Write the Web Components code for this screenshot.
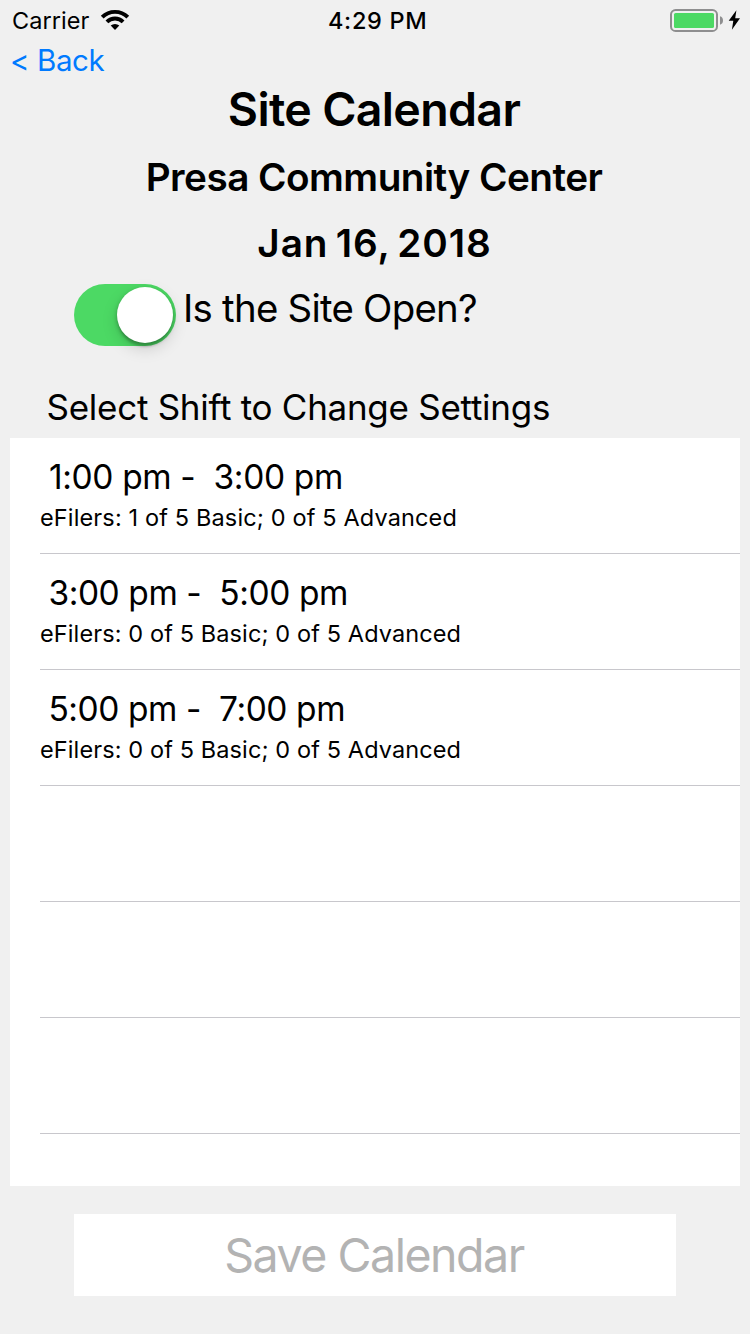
<!DOCTYPE html>
<html lang="en">
<head>
<meta charset="utf-8">
<title>Site Calendar</title>
<style>
body { margin: 0; background: #f0f0f0; color: #000; font-family: Inter, "Liberation Sans", sans-serif; }
</style>
</head>
<body>
<calendar-screen></calendar-screen>
<script>
function define(name, markup) {
  const template = document.createElement('template');
  template.innerHTML = markup;
  customElements.define(name, class extends HTMLElement {
    constructor() {
      super();
      this.attachShadow({ mode: 'open' }).append(template.content.cloneNode(true));
    }
  });
}

define('wifi-icon', `
<style>:host { display: block; width: 30px; height: 22px; } svg { display: block; }</style>
<svg width="30" height="22" viewBox="0 0 30 22">
  <g fill="none" stroke="#000" stroke-width="3.9">
    <path d="M2.2 8.2A18.1 18.1 0 0 1 27.8 8.2"/>
    <path d="M6.9 12.9A11.5 11.5 0 0 1 23.1 12.9"/>
  </g>
  <path d="M15 21L10.7 16.6A6.3 6.3 0 0 1 19.3 16.6Z"/>
</svg>`);

define('battery-icon', `
<style>:host { display: block; width: 72px; height: 24px; } svg { display: block; }</style>
<svg width="72" height="24" viewBox="0 0 72 24">
  <rect x="1" y="2" width="46" height="21" rx="4.6" fill="none" stroke="#8e8e8f" stroke-width="2"/>
  <rect x="4" y="5" width="40" height="15" rx="1.6" fill="#4cd964"/>
  <path d="M50 8.3Q53 9.2 53 12.5T50 16.7Z" fill="#8e8e8f"/>
  <path d="M66.4 2.2L58.7 12.8H63.3L61.9 21.8L70 10.3H65.2Z"/>
</svg>`);

define('status-bar', `
<style>
:host { display: grid; grid-template-columns: 1fr auto 1fr; height: 40px; line-height: 41px; font-size: 23.5px; box-sizing: border-box; padding: 0 8px 0 12px; }
.left { display: flex; }
.left span { letter-spacing: .05px; }
wifi-icon { margin: 9px 0 0 10.6px; }
.time { font-weight: 500; letter-spacing: .7px; margin-left: 1.5px; }
battery-icon { justify-self: end; margin-top: 8px; }
</style>
<div class="left"><span>Carrier</span><wifi-icon></wifi-icon></div>
<span class="time">4:29 PM</span>
<battery-icon></battery-icon>`);

define('back-link', `
<style>
:host { display: block; height: 41px; line-height: 41px; padding-left: 10px; font-size: 29.5px; letter-spacing: -.4px; color: #007aff; }
</style>
<slot></slot>`);

define('page-heading', `
<style>
:host { display: block; text-align: center; font-weight: 600; }
.title { font-size: 46.5px; line-height: 56px; padding: 0 2px 7px 0; letter-spacing: -.65px; }
.sub { font-size: 38.7px; line-height: 66px; padding-right: 2px; letter-spacing: -.53px; }
.date { padding-right: 1px; letter-spacing: .95px; word-spacing: -3.5px; }
</style>
<div class="title"><slot name="title"></slot></div>
<div class="sub"><slot name="site"></slot></div>
<div class="sub date"><slot name="date"></slot></div>`);

define('toggle-switch', `
<style>
:host { display: flex; justify-content: flex-end; box-sizing: border-box; width: 102px; height: 62px; border-radius: 31px; padding: 3px; background: #4cd964; }
i { display: block; width: 56px; height: 56px; border-radius: 50%; background: #fff; box-shadow: 0 6px 16px rgba(0,0,0,.15), 0 6px 2px -2px rgba(0,0,0,.1), 0 2px 4px rgba(0,0,0,.28); }
</style>
<i></i>`);

define('open-row', `
<style>
:host { display: flex; align-items: flex-start; height: 100px; padding-left: 74px; }
toggle-switch { margin-top: 8px; }
span { margin-left: 7px; font-size: 38.4px; line-height: 64px; letter-spacing: -.75px; }
</style>
<toggle-switch></toggle-switch><span><slot></slot></span>`);

define('section-label', `
<style>:host { display: block; padding-left: 46.5px; height: 62px; line-height: 62px; font-size: 35px; letter-spacing: -.27px; }</style>
<slot></slot>`);

define('shift-table', `
<style>:host { display: block; overflow: hidden; height: 748px; margin: 0 10px; background: #fff; }</style>
<slot></slot>`);

define('shift-row', `
<style>
:host { display: block; box-sizing: border-box; height: 116px; margin-left: 30px; padding-top: 17px; border-bottom: 1px solid #c8c7cc; }
.time { padding-left: 8.4px; font-size: 33.5px; line-height: 44px; letter-spacing: -.42px; white-space: pre; }
:host(:first-child) .time { padding-left: 9px; letter-spacing: -.36px; }
.info { font-size: 23.5px; line-height: 37px; letter-spacing: .11px; }
:host(:first-child) .info { letter-spacing: .14px; }
</style>
<div class="time"><slot name="time"></slot></div>
<div class="info"><slot></slot></div>`);

define('save-button', `
<style>
:host { display: block; margin: 28px 74px 0; }
button { display: block; width: 100%; height: 82px; margin: 0; padding: 0 2px 0 0; border: 0; background: #fff; color: #b3b3b3; font: 400 46.5px/82px Inter, "Liberation Sans", sans-serif; letter-spacing: -1.48px; }
</style>
<button disabled><slot></slot></button>`);

define('calendar-screen', `
<style>:host { display: flex; flex-direction: column; height: 1334px; overflow: hidden; }</style>
<status-bar></status-bar>
<back-link>&lt; Back</back-link>
<page-heading>
  <span slot="title">Site Calendar</span>
  <span slot="site">Presa Community Center</span>
  <span slot="date">Jan 16, 2018</span>
</page-heading>
<open-row>Is the Site Open?</open-row>
<section-label>Select Shift to Change Settings</section-label>
<shift-table>
  <shift-row><span slot="time">1:00 pm -  3:00 pm</span>eFilers: 1 of 5 Basic; 0 of 5 Advanced</shift-row>
  <shift-row><span slot="time">3:00 pm -  5:00 pm</span>eFilers: 0 of 5 Basic; 0 of 5 Advanced</shift-row>
  <shift-row><span slot="time">5:00 pm -  7:00 pm</span>eFilers: 0 of 5 Basic; 0 of 5 Advanced</shift-row>
  <shift-row></shift-row>
  <shift-row></shift-row>
  <shift-row></shift-row>
</shift-table>
<save-button>Save Calendar</save-button>`);
</script>
</body>
</html>
